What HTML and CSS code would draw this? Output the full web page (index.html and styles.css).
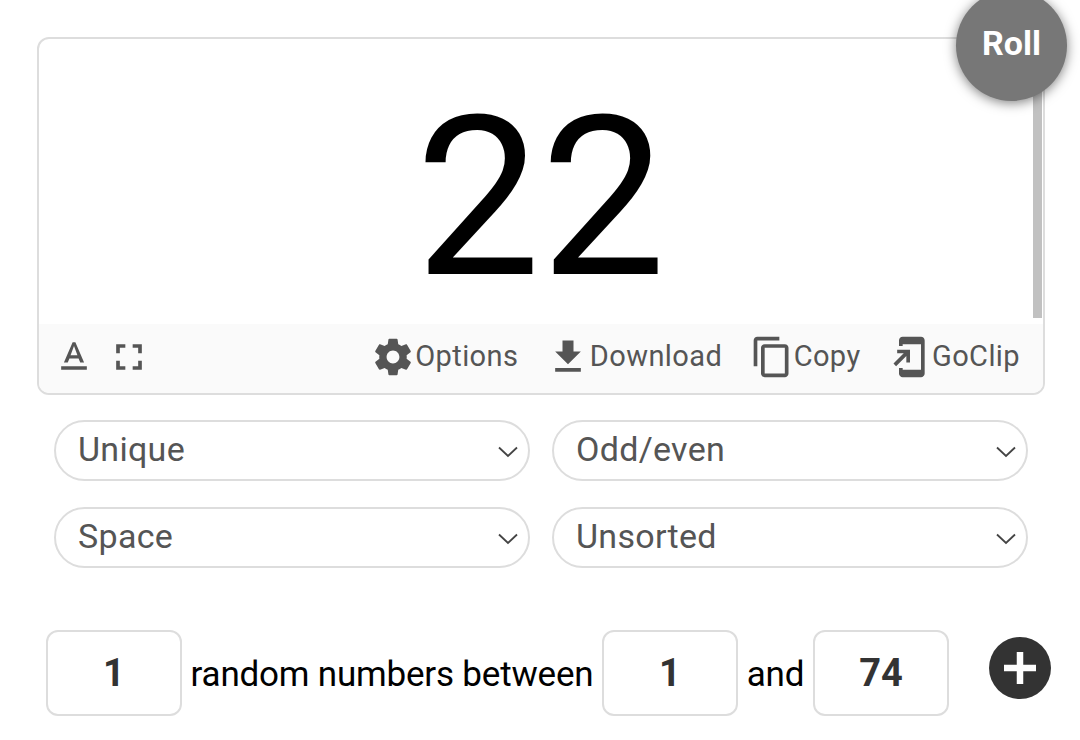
FILE: index.html
```html
<!DOCTYPE html>
<html lang="en">
<head>
<meta charset="UTF-8">
<meta name="viewport" content="width=device-width, initial-scale=1.0">
<title>Random Number Generator</title>
<link rel="stylesheet" href="styles.css">
</head>
<body>
  <div class="result-card">
    <div class="result">22</div>
    <div class="scrollbar"></div>
    <div class="toolbar">
      <button class="tool" aria-label="Text format">
        <svg viewBox="0 0 24 24"><path d="M5 17v2h14v-2H5zm4.5-4.2h5l.9 2.2h2.1L12.75 4h-1.5L6.5 15h2.1l.9-2.2zM12 5.98L13.87 11h-3.74L12 5.98z"/></svg>
      </button>
      <button class="tool fullscreen" aria-label="Fullscreen">
        <svg viewBox="0 0 24 24"><path d="M7 14H5v5h5v-2H7v-3zm-2-4h2V7h3V5H5v5zm12 7h-3v2h5v-5h-2v3zM14 5v2h3v3h2V5h-5z"/></svg>
      </button>
      <div class="actions">
        <button class="tool">
          <svg viewBox="0 0 24 24"><path d="M19.43 12.98c.04-.32.07-.64.07-.98s-.03-.66-.07-.98l2.11-1.65c.19-.15.24-.42.12-.64l-2-3.46c-.12-.22-.39-.3-.61-.22l-2.49 1c-.52-.4-1.08-.73-1.69-.98l-.38-2.65C14.46 2.18 14.25 2 14 2h-4c-.25 0-.46.18-.49.42l-.38 2.65c-.61.25-1.17.59-1.69.98l-2.49-1c-.23-.09-.49 0-.61.22l-2 3.46c-.13.22-.07.49.12.64l2.11 1.65c-.04.32-.07.65-.07.98s.03.66.07.98l-2.11 1.65c-.19.15-.24.42-.12.64l2 3.46c.12.22.39.3.61.22l2.49-1c.52.4 1.08.73 1.69.98l.38 2.65c.03.24.24.42.49.42h4c.25 0 .46-.18.49-.42l.38-2.65c.61-.25 1.17-.59 1.69-.98l2.49 1c.23.09.49 0 .61-.22l2-3.46c.12-.22.07-.49-.12-.64l-2.11-1.65zM12 15.5c-1.93 0-3.5-1.57-3.5-3.5s1.57-3.5 3.5-3.5 3.5 1.57 3.5 3.5-1.57 3.5-3.5 3.5z"/></svg>
          <span>Options</span>
        </button>
        <button class="tool">
          <svg viewBox="0 0 24 24"><path d="M19 9h-4V3H9v6H5l7 7 7-7zM5 18v2h14v-2H5z"/></svg>
          <span>Download</span>
        </button>
        <button class="tool">
          <svg viewBox="0 0 24 24"><path d="M16 1H4c-1.1 0-2 .9-2 2v14h2V3h12V1zm3 4H8c-1.1 0-2 .9-2 2v14c0 1.1.9 2 2 2h11c1.1 0 2-.9 2-2V7c0-1.1-.9-2-2-2zm0 16H8V7h11v14z"/></svg>
          <span>Copy</span>
        </button>
        <button class="tool">
          <svg viewBox="0 0 24 24"><path d="M18 1.01L8 1c-1.1 0-2 .9-2 2v3h2V5h10v14H8v-1H6v3c0 1.1.9 2 2 2h10c1.1 0 2-.9 2-2V3c0-1.1-.9-1.99-2-1.99zM10 15h2V8H5v2h3.59L3 15.59 4.41 17 10 11.41V15z"/></svg>
          <span>GoClip</span>
        </button>
      </div>
    </div>
    <button class="roll">Roll</button>
  </div>

  <div class="filters">
    <div class="select">
      <span>Unique</span>
      <svg viewBox="0 0 20 12"><path d="M1 1.5l9 8.5 9-8.5"/></svg>
    </div>
    <div class="select">
      <span>Odd/even</span>
      <svg viewBox="0 0 20 12"><path d="M1 1.5l9 8.5 9-8.5"/></svg>
    </div>
    <div class="select">
      <span>Space</span>
      <svg viewBox="0 0 20 12"><path d="M1 1.5l9 8.5 9-8.5"/></svg>
    </div>
    <div class="select">
      <span>Unsorted</span>
      <svg viewBox="0 0 20 12"><path d="M1 1.5l9 8.5 9-8.5"/></svg>
    </div>
  </div>

  <div class="range">
    <input type="text" value="1" aria-label="Amount">
    <span class="label-long">random numbers between</span>
    <input type="text" value="1" aria-label="From">
    <span class="label-and">and</span>
    <input type="text" value="74" aria-label="To">
    <button class="add" aria-label="Add">
      <svg viewBox="0 0 62 62"><path d="M31 15v32M15 31h32"/></svg>
    </button>
  </div>
</body>
</html>
```
FILE: styles.css
```css
* {
  box-sizing: border-box;
}
body {
  margin: 0;
  height: 740px;
  padding: 37px 0 0;
  overflow: hidden;
  background: #fff;
  font-family: Roboto, sans-serif;
}
button {
  border: 0;
  padding: 0;
  background: none;
  font-family: inherit;
  cursor: pointer;
}
.result-card {
  position: relative;
  display: flex;
  flex-direction: column;
  width: 1008px;
  height: 358px;
  margin-left: 37px;
  border: 2px solid #ddd;
  border-radius: 12px;
}
.result {
  height: 285px;
  padding: 30px 1px 0 0;
  font-size: 223px;
  line-height: 257px;
  text-align: center;
  color: #000;
}
.scrollbar {
  position: absolute;
  top: 2px;
  right: 1px;
  width: 9px;
  height: 277px;
  background: #c1c1c1;
}
.toolbar {
  display: flex;
  align-items: center;
  height: 69px;
  padding: 0 23px 4px 13px;
  border-radius: 0 0 10px 10px;
  background: #fafafa;
}
.tool {
  display: flex;
  align-items: center;
  height: 44px;
  color: #555;
  font-size: 29px;
  letter-spacing: 0.4px;
}
.tool svg {
  width: 44px;
  height: 44px;
  fill: #555;
}
.tool span {
  padding-bottom: 2px;
}
.fullscreen {
  margin-left: 11px;
}
.actions {
  display: flex;
  gap: 27.5px;
  margin-left: auto;
}
.roll {
  position: absolute;
  top: -49px;
  right: -24px;
  width: 111px;
  height: 111px;
  padding-bottom: 5px;
  border-radius: 50%;
  background: #777;
  color: #fff;
  font-size: 34px;
  font-weight: bold;
  box-shadow: 0 2px 12px rgba(0, 0, 0, 0.5);
}
.filters {
  display: grid;
  grid-template-columns: 476px 476px;
  gap: 26px 22px;
  margin: 25px 0 0 54px;
}
.select {
  display: flex;
  align-items: center;
  justify-content: space-between;
  height: 61px;
  padding: 0 10px 2px 22px;
  border: 2px solid #ddd;
  border-radius: 31px;
  color: #555;
  font-size: 34px;
  letter-spacing: 0.3px;
}
.select span {
  padding-bottom: 2px;
}
.select svg {
  width: 20px;
  height: 12px;
  margin-top: 4px;
  fill: none;
  stroke: #444;
  stroke-width: 1.8;
}
.range {
  display: flex;
  align-items: center;
  height: 86px;
  margin: 62px 0 0 46px;
  font-size: 35px;
  color: #000;
}
.range input {
  width: 136px;
  height: 86px;
  padding: 0;
  border: 2px solid #ddd;
  border-radius: 12px;
  font-family: inherit;
  font-size: 38px;
  font-weight: bold;
  text-align: center;
  color: #333;
}
.label-long {
  width: 420px;
  padding-top: 2px;
  letter-spacing: -0.2px;
  text-align: center;
}
.label-and {
  width: 75px;
  padding-top: 2px;
  letter-spacing: -0.2px;
  text-align: center;
}
.add {
  width: 62px;
  height: 62px;
  margin: 0 0 11px 40px;
  border-radius: 50%;
  background: #333;
}
.add svg {
  display: block;
  stroke: #fff;
  stroke-width: 6.5;
}
```
